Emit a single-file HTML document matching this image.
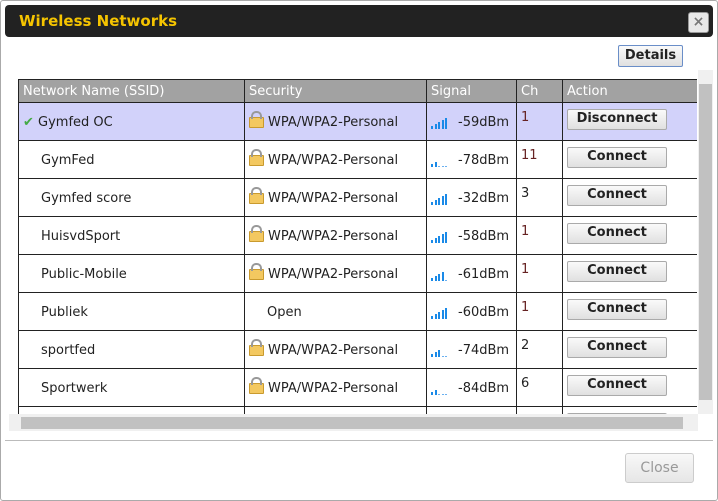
<!DOCTYPE html><html><head><style>
body{margin:0;width:718px;height:501px;background:#fff;font-family:"DejaVu Sans",sans-serif;font-size:13px;color:#222;position:relative;overflow:hidden}
.dlg{position:absolute;left:0;top:0;width:716px;height:499px;border:1px solid #aaa;border-radius:3px}
.title{position:absolute;left:5px;top:5px;width:708px;height:32px;background:#222;border-radius:4px}
.title span{position:absolute;left:14px;top:7px;color:#f5c400;font-weight:bold;font-size:15px}
.x{position:absolute;left:688px;top:12px;width:19px;height:19px;background:#e8e8e8;border:1px solid #999;border-radius:3px;color:#777;font-weight:bold;text-align:center;line-height:18px;font-size:14px}
.det{position:absolute;left:618px;top:45px;width:63px;height:20px;border:1px solid #6a8ec8;background:linear-gradient(#fafafa,#e0e0e0);font-weight:bold;text-align:center;line-height:20px;font-size:13px;border-radius:2px}
.sc{position:absolute;left:9px;top:70px;width:688px;height:344px;overflow:hidden}
table{position:absolute;left:9px;top:9px;border-collapse:collapse;width:700px;table-layout:fixed}
td,th{border:1px solid #222;height:37px;padding:3px 4px 0;text-align:left;white-space:nowrap;line-height:16px;box-sizing:border-box;overflow:hidden}
tr{height:38px}
tr.h{height:23px}
th{background:#a2a2a2;color:#fff;font-weight:normal;height:23px;padding-top:1px}
tr.sel td{background:#d2d2fa}
.lk{display:inline-block;width:13px;height:9px;background:#f3c860;border:1px solid #c99a2e;border-radius:1px;position:relative;margin-right:4px;vertical-align:-2px}
.lk:before{content:"";position:absolute;left:1px;top:-7px;width:7px;height:6px;border:2px solid #999;border-bottom:none;border-radius:5px 5px 0 0}
.sig{display:inline-block;width:17px;height:11px;position:relative;margin-right:10px;vertical-align:-3px}
.sig i{position:absolute;bottom:0;width:2px;background:#1a8ae8}
.sig i.o{height:1px!important;background:#6ab0f0}
td.ch{vertical-align:top;padding-top:7px}
.btn{display:inline-block;width:98px;height:19px;border:1px solid #aaa;background:linear-gradient(#fafafa,#e0e0e0);font-weight:bold;text-align:center;line-height:18px;border-radius:2px;vertical-align:middle;margin-top:-6px}
.vs{position:absolute;left:698px;top:70px;width:15px;height:344px;background:#f0f0f0}
.vs div{position:absolute;left:1px;top:14px;width:13px;height:316px;background:#c1c1c1}
.hs{position:absolute;left:9px;top:414px;width:689px;height:17px;background:#f0f0f0}
.hs div{position:absolute;left:12px;top:3px;width:662px;height:12px;background:#c1c1c1}
.line{position:absolute;left:5px;top:440px;width:708px;height:1px;background:#bbb}
.close{position:absolute;left:625px;top:453px;width:67px;height:28px;border:1px solid #ccc;background:linear-gradient(#f8f8f8,#e6e6e6);color:#999;text-align:center;line-height:28px;font-size:14px;border-radius:3px}
</style></head><body>
<div class="dlg"></div>
<div class="title"><span>Wireless Networks</span></div>
<div class="x">×</div>
<div class="det">Details</div>
<div class="sc"><table>
<colgroup><col style="width:226px"><col style="width:182px"><col style="width:90px"><col style="width:46px"><col></colgroup>
<tr class="h"><th>Network Name (SSID)</th><th>Security</th><th>Signal</th><th>Ch</th><th>Action</th></tr>
<tr class="sel"><td><span style="color:#4a4;font-weight:bold">✔</span> Gymfed OC</td><td><span class="lk"></span>WPA/WPA2-Personal</td><td><span class="sig" data-l="5"></span>-59dBm</td><td class="ch" style="color:#622">1</td><td><span class="btn">Disconnect</span></td></tr>
<tr><td style="padding-left:22px">GymFed</td><td><span class="lk"></span>WPA/WPA2-Personal</td><td><span class="sig" data-l="2"></span>-78dBm</td><td class="ch" style="color:#622">11</td><td><span class="btn">Connect</span></td></tr>
<tr><td style="padding-left:22px">Gymfed score</td><td><span class="lk"></span>WPA/WPA2-Personal</td><td><span class="sig" data-l="5"></span>-32dBm</td><td class="ch">3</td><td><span class="btn">Connect</span></td></tr>
<tr><td style="padding-left:22px">HuisvdSport</td><td><span class="lk"></span>WPA/WPA2-Personal</td><td><span class="sig" data-l="5"></span>-58dBm</td><td class="ch" style="color:#622">1</td><td><span class="btn">Connect</span></td></tr>
<tr><td style="padding-left:22px">Public-Mobile</td><td><span class="lk"></span>WPA/WPA2-Personal</td><td><span class="sig" data-l="4"></span>-61dBm</td><td class="ch" style="color:#622">1</td><td><span class="btn">Connect</span></td></tr>
<tr><td style="padding-left:22px">Publiek</td><td style="padding-left:22px">Open</td><td><span class="sig" data-l="5"></span>-60dBm</td><td class="ch" style="color:#622">1</td><td><span class="btn">Connect</span></td></tr>
<tr><td style="padding-left:22px">sportfed</td><td><span class="lk"></span>WPA/WPA2-Personal</td><td><span class="sig" data-l="3"></span>-74dBm</td><td class="ch">2</td><td><span class="btn">Connect</span></td></tr>
<tr><td style="padding-left:22px">Sportwerk</td><td><span class="lk"></span>WPA/WPA2-Personal</td><td><span class="sig" data-l="2"></span>-84dBm</td><td class="ch">6</td><td><span class="btn">Connect</span></td></tr>
<tr><td></td><td></td><td></td><td></td><td><span class="btn"></span></td></tr>
</table></div>
<div class="vs"><div></div></div>
<div class="hs"><div></div></div>
<div class="line"></div>
<div class="close">Close</div>
<script>
document.querySelectorAll('.sig').forEach(function(s){var l=+s.getAttribute('data-l');for(var k=0;k<5;k++){var i=document.createElement('i');i.style.left=(k*3.5)+'px';i.style.height=(3+k*2)+'px';if(k>=l)i.className='o';s.appendChild(i);}});
</script>
</body></html>
